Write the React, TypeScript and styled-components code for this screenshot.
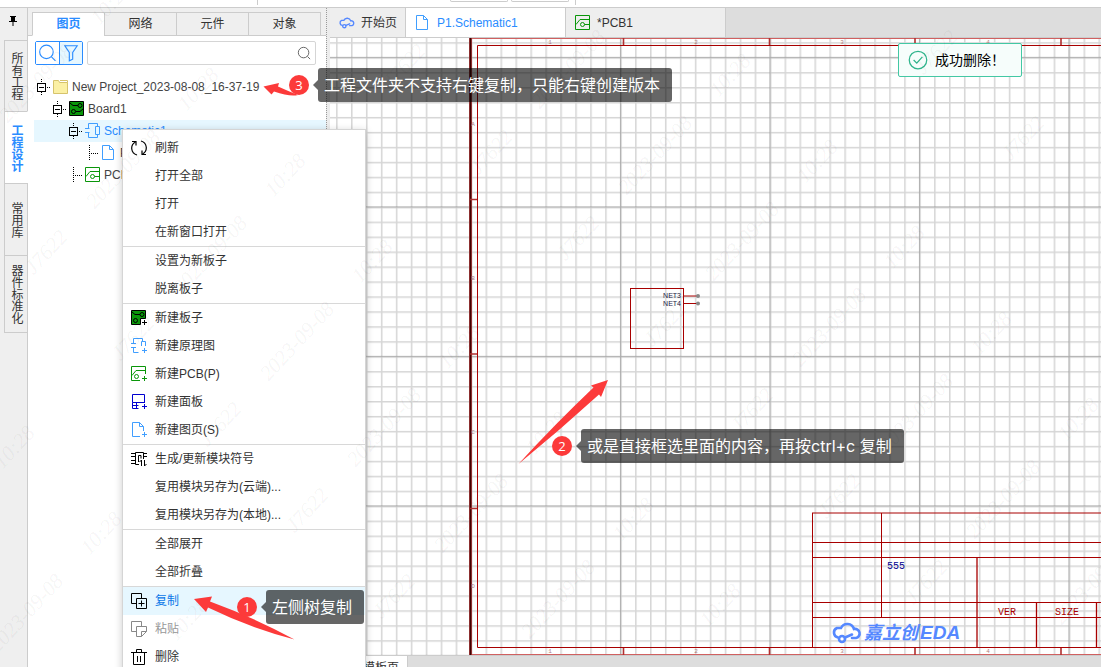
import React from "react";
import styled, { createGlobalStyle, css } from "styled-components";

const GlobalStyle = createGlobalStyle`
  *, *::before, *::after { box-sizing: border-box; }
  html, body, #root { height: 100%; }
  body {
    margin: 0;
    overflow: hidden;
    background: #fff;
    color: #333;
    font: 12px/16px "Liberation Sans", "Noto Sans CJK SC", sans-serif;
  }
  button, input { font: inherit; color: inherit; }
  ul { list-style: none; margin: 0; padding: 0; }
  svg { display: block; }
`;

const blue = "#2a8cff";
const line = "#ccc";

/* ---------- page frame ---------- */

const Page = styled.div`
  position: relative;
  display: flex;
  flex-direction: column;
  height: 100vh;
  overflow: hidden;
`;

const TopStrip = styled.header`
  flex: none;
  height: 8px;
  border-bottom: 1px solid ${line};
  display: flex;
  align-items: flex-start;
  padding-left: 257px;
`;

const StripRule = styled.span`
  width: 1px;
  height: 5px;
  background: ${line};
`;

const StripBox = styled.span<{ $gap: number }>`
  width: 58px;
  height: 2px;
  margin-left: ${(p) => p.$gap}px;
  border: solid ${line};
  border-width: 0 1px 1px;
  border-radius: 0 0 3px 3px;
`;

const StripEnd = styled(StripRule)`
  margin-left: 6px;
`;

const Workspace = styled.div`
  flex: 1;
  min-height: 0;
  display: flex;
`;

/* ---------- left rail ---------- */

const Rail = styled.nav`
  flex: none;
  width: 28px;
  display: flex;
  flex-direction: column;
  align-items: flex-end;
  background: #efefef;
  box-shadow: inset -1px 0 ${line};
`;

const PinButton = styled.button`
  width: 28px;
  height: 32px;
  padding: 0 8px 6px;
  border: 0;
  background: none;
`;

const RailTab = styled.button<{ $active?: boolean; $height: number }>`
  width: 24px;
  height: ${(p) => p.$height}px;
  padding: 0;
  display: flex;
  align-items: center;
  justify-content: center;
  border: solid ${line};
  border-width: 1px 1px 0 1px;
  background: #efefef;
  writing-mode: vertical-rl;
  text-orientation: upright;
  line-height: 14px;
  &:last-child { border-bottom-width: 1px; }
  ${(p) =>
    p.$active &&
    css`
      background: #fff;
      border-right-color: #fff;
      color: ${blue};
      font-weight: 700;
    `}
`;

/* ---------- project panel ---------- */

const Panel = styled.aside`
  flex: none;
  width: 298px;
  display: flex;
  flex-direction: column;
`;

const PanelTabs = styled.div`
  display: flex;
  height: 28px;
  padding: 4px 5px 0 4px;
  background: #efefef;
  box-shadow: inset 0 -1px ${line};
`;

const PanelTab = styled.button<{ $active?: boolean }>`
  flex: 1;
  height: 24px;
  padding: 0;
  border: solid ${line};
  border-width: 1px 0 1px 1px;
  background: #efefef;
  &:last-child { border-right-width: 1px; }
  ${(p) =>
    p.$active &&
    css`
      background: #fff;
      border-bottom-color: #fff;
      color: ${blue};
      font-weight: 700;
    `}
`;

const SearchRow = styled.div`
  display: flex;
  gap: 4px;
  padding: 5px 10px 0 7px;
`;

const ToggleGroup = styled.div`
  display: flex;
  border: 1px solid ${blue};
  border-radius: 2px;
`;

const Toggle = styled.button<{ $on?: boolean }>`
  width: 23px;
  height: 22px;
  padding: 2px;
  border: 0;
  background: ${(p) => (p.$on ? "#e6f7ff" : "#fff")};
  & + & { border-left: 1px solid ${blue}; }
`;

const SearchField = styled.label`
  flex: 1;
  display: flex;
  align-items: center;
  height: 24px;
  padding: 0 4px;
  border: 1px solid #d5d5d5;
  border-radius: 2px;
`;

const SearchInput = styled.input`
  flex: 1;
  min-width: 0;
  border: 0;
  outline: 0;
  background: none;
`;

const Tree = styled.ul`
  padding: 11px 0 0 6px;
`;

const TreeRow = styled.li<{ $depth: number; $active?: boolean }>`
  display: flex;
  align-items: center;
  height: 22px;
  padding-left: ${(p) => 3 + p.$depth * 16}px;
  white-space: nowrap;
  background: ${(p) => (p.$active ? "#e6f7ff" : "transparent")};
  color: ${(p) => (p.$active ? blue : "#444")};
  svg { flex: none; }
`;

const TreeLabel = styled.span`
  margin-left: 3px;
`;

const Splitter = styled.div`
  flex: none;
  width: 4px;
  border-left: 1px dotted #999;
  background: #ececec;
`;

/* ---------- editor ---------- */

const Editor = styled.main`
  flex: 1;
  min-width: 0;
  display: flex;
  flex-direction: column;
`;

const DocTabs = styled.div`
  flex: none;
  display: flex;
  height: 30px;
  background: #ddd;
  border-bottom: 1px solid ${line};
`;

const DocTab = styled.button<{ $width: number; $active?: boolean }>`
  width: ${(p) => p.$width}px;
  display: flex;
  align-items: center;
  gap: 6px;
  padding: 0 0 0 9px;
  border: 0;
  border-right: 1px solid ${line};
  background: ${(p) => (p.$active ? "#fff" : "#eee")};
  color: ${(p) => (p.$active ? blue : "#333")};
  white-space: nowrap;
`;

const Canvas = styled.div`
  flex: 1;
  min-height: 0;
  overflow: hidden;
  background: #fff;
`;

const SheetTabs = styled.footer`
  flex: none;
  height: 12px;
  overflow: hidden;
  display: flex;
  align-items: flex-start;
  background: #ddd;
  border-top: 1px solid ${line};
`;

const SheetTab = styled.button`
  width: 78px;
  height: 24px;
  flex: none;
  padding: 0 8px;
  border: 0;
  border-right: 1px solid ${line};
  background: #fff;
  text-align: right;
`;

/* ---------- context menu ---------- */

const Menu = styled.ul`
  position: absolute;
  left: 122px;
  top: 129px;
  width: 244px;
  padding: 4px 0;
  border: 1px solid #d5d5d5;
  background: #fff;
  box-shadow: 0 2px 8px rgba(0, 0, 0, 0.2);
`;

const MenuGroup = styled.li`
  & + & { border-top: 1px solid #d8d8d8; }
`;

const MenuButton = styled.button<{ $active?: boolean }>`
  display: flex;
  align-items: center;
  width: 100%;
  height: 28px;
  padding: 0 8px;
  border: 0;
  text-align: left;
  background: ${(p) => (p.$active ? "#e6f7ff" : "transparent")};
  color: ${(p) => (p.$active ? "#0a78e8" : "#333")};
  &:disabled { color: #999; }
`;

const MenuIcon = styled.span`
  flex: none;
  width: 24px;
`;

/* ---------- overlays ---------- */

const Toast = styled.div`
  position: absolute;
  right: 79px;
  top: 43px;
  display: flex;
  align-items: center;
  gap: 7px;
  width: 124px;
  height: 34px;
  padding-left: 9px;
  border: 1px solid #43c8a4;
  border-radius: 2px;
  background: #f6fdfb;
  color: #000;
  font-size: 14px;
  line-height: 20px;
  white-space: nowrap;
`;

const Overlay = styled.svg`
  position: absolute;
  left: 0;
  top: 0;
  width: 100%;
  height: 100%;
  pointer-events: none;
`;

const Note = styled.div<{ $x: number; $y: number }>`
  position: absolute;
  left: ${(p) => p.$x}px;
  top: ${(p) => p.$y}px;
  display: flex;
  align-items: center;
  font-family: Inter, "Noto Sans CJK SC", sans-serif;
`;

const Badge = styled.span`
  width: 20px;
  height: 20px;
  margin-right: 4px;
  border-radius: 50%;
  background: #fc3a3a;
  color: #fff;
  font-family: "Open Sans", sans-serif;
  font-size: 13px;
  line-height: 20px;
  text-align: center;
`;

const Pointer = styled.span`
  border: solid transparent;
  border-width: 5px 5px 5px 0;
  border-right-color: rgba(0, 0, 0, 0.6);
`;

const NoteText = styled.span`
  height: 34px;
  padding: 0 12px 0 6px;
  border-radius: 3px;
  background: rgba(0, 0, 0, 0.6);
  color: #fff;
  font-size: 16px;
  line-height: 34px;
  white-space: nowrap;
`;

/* ---------- icons ---------- */

const Icon = ({ children, size = 16, color = "#000" }: { children: React.ReactNode; size?: number; color?: string }) => (
  <svg width={size} height={size} viewBox="0 0 16 16" fill="none" stroke={color} aria-hidden>
    {children}
  </svg>
);

const Plus = () => <path d="M11 12.5h5M13.5 10v5" />;

const Expander = () => (
  <svg width="16" height="22" fill="none" stroke="#000" aria-hidden>
    <path d="M4.5 3v3M4.5 16v3" strokeDasharray="1 1" />
    <rect x="0.5" y="7.5" width="8" height="8" />
    <path d="M2 11.5h5" />
    <path d="M10 11.5h4" strokeDasharray="1 1" />
  </svg>
);

const Branch = () => (
  <svg width="16" height="22" fill="none" stroke="#000" aria-hidden>
    <path d="M4.5 3v16M6 11.5h8" strokeDasharray="1 1" />
  </svg>
);

const FolderIcon = () => (
  <Icon color="#d6c36c">
    <path d="M0.5 1.5h5l1 2h8v11h-14z" fill="#fbf0a4" />
    <path d="M7 1.5h7.500v2" />
  </Icon>
);

const BoardIcon = ({ add }: { add?: boolean }) => (
  <Icon>
    <path d={add ? "M.5 .5h14v8h-5v6h-9z" : "M.5 .5h14v14h-14z"} fill="#0a960a" />
    <path d="M1 2l3 2.500h5" />
    <circle cx="11" cy="4.500" r="2" />
    <circle cx="4.500" cy="10.500" r="2" />
    {add ? <Plus /> : <path d="M7 10.500h4l3.500-3" />}
  </Icon>
);

const SchematicIcon = ({ add }: { add?: boolean }) => (
  <Icon color="#409eff">
    {add ? (
      <>
        <path d="M0 5.5h5M2.5 5V.5h9V4M0 9.5h5M2.5 9.500v5h5M10.500 8V3.500h4V8" />
        <Plus />
      </>
    ) : (
      <path d="M0 5.500h4.500M3.500 5.500v-5h9v3M0 9.500h4.500M3.500 9.500v5h9v-3M10.500 3.500h4v8h-4z" />
    )}
  </Icon>
);

const PcbIcon = ({ add }: { add?: boolean }) => (
  <Icon color="#0a960a">
    <path d={add ? "M9 14.5H.5V.5h14V8" : "M.5 .5h14v14h-14z"} />
    <path d="M1 9.500L5 4.500h10" />
    <circle cx={add ? 5.5 : 7.5} cy={add ? 10.5 : 9.5} r="2" />
    {add ? <Plus /> : <path d="M9.500 9.500h5" />}
  </Icon>
);

const PageIcon = ({ add }: { add?: boolean }) => (
  <Icon color="#409eff">
    <path d={add ? "M9 14.500H1.500V.5h7l4 4V9" : "M1.500 .5h7l4 4v10h-11z"} />
    <path d="M8.500 .5v4h4" />
    {add && <Plus />}
  </Icon>
);

const PanelIcon = () => (
  <Icon color="#0000d0">
    <path d="M13.500 9V.5h-12v8h12M1.500 8.500v6h6M1.500 11.500h6M5.500 9v6" />
    <Plus />
  </Icon>
);

const RefreshIcon = () => (
  <Icon>
    <path d="M6 15A7 7 0 0 1 4.500 2M10 1A7 7 0 0 1 11.500 14" strokeWidth="1.200" />
    <path d="M1 1.500h4v4M15 14.500h-4v-4" strokeWidth="1.200" />
  </Icon>
);

const ModuleIcon = () => (
  <Icon>
    <path d="M8 13.500H4.500v-12h8V8M0 2.500h4M0 5.500h4M0 9.500h4M0 12.500h4M13 2.500h3M13 5.500h3M7.500 11V4.500h2.500v3M10.500 15V9L8.500 11M13.500 9v6l2-2" />
  </Icon>
);

const CopyIcon = () => (
  <Icon>
    <path d="M5 10.5H.5V.5h10V5M5.5 5.5h10v10h-10zM10.5 7.5v6M7.5 10.5h6" />
  </Icon>
);

const PasteIcon = () => (
  <Icon color="#888">
    <path d="M5 10.5H.5V.5h10V5M5.5 15.5v-10h10v5l-5 5zM10.5 15.5v-5h5" />
  </Icon>
);

const TrashIcon = () => (
  <Icon>
    <path d="M0 3.5h16M5.500 3V.5h5V3M2.500 4v11.500h11V4M6.500 7v6M9.500 7v6" />
  </Icon>
);

const CloudLogo = ({ width, height }: { width: number; height: number }) => (
  <svg width={width} height={height} viewBox="0 0 30 22" fill="none" stroke="#5588ff" strokeWidth="2.600" strokeLinecap="round" aria-hidden>
    <path d="M6 15.500a5 5 0 0 1-1-9.500h4a7 7 0 0 1 13 1a4.500 4.500 0 0 1 2 9h-4" />
    <circle cx="10" cy="17" r="3" />
    <path d="M13 15.500l7-3" />
  </svg>
);

/* ---------- schematic drawing ---------- */

const red = "#a80000";

const SchematicDrawing = () => (
  <svg width="100%" height="100%" aria-label="Schematic sheet">
    <defs>
      <pattern id="minor" x="-8.9" y="4.2" width="14.95" height="14.95" patternUnits="userSpaceOnUse">
        <path d="M0 .8h14.95M.8 0v14.95" stroke="#000" strokeOpacity="0.16" strokeWidth="1.500" />
      </pattern>
      <pattern id="major" x="-9.1" y="18.8" width="149.5" height="149.5" patternUnits="userSpaceOnUse">
        <path d="M0 .6h149.5M.6 0v149.5" stroke="#000" strokeOpacity="0.2" strokeWidth="1.200" />
      </pattern>
    </defs>
    <rect width="100%" height="100%" fill="url(#minor)" />
    <rect width="100%" height="100%" fill="url(#major)" />

    <g fill="none" stroke={red}>
      <path d="M141 .5H2000M141 616.5H2000" stroke="#d06060" />
      <path d="M140.5 0v617" stroke="#c05050" strokeWidth="3" />
      <path d="M140.500 0v617" stroke="#400000" strokeWidth="1.800" />
      <path d="M2000 7.5H147.5V609.5H2000" />
      <path d="M140 161.5h7M140 316h7M140 470.5h7" stroke="#b03030" strokeWidth="1.600" />
      <path d="M293.5 0v7M439.5 0v7M585 0v7M731 0v7M293.5 610v7M439.5 610v7M585 610v7M731 610v7" stroke="#b03030" strokeWidth="1.600" />
      <path d="M482.5 609V475M482 475H2000M482 504.5H2000M482 519.5H2000M482 564.5H2000M482 579.5H2000M551.5 475V580" />
      <path d="M647 519v90M706.5 564v45M766.5 564v45" strokeWidth="1.300" />
      <rect x="300.5" y="250.5" width="53" height="60" />
      <path d="M353 258h14M353 265.5h14" />
    </g>
    <circle cx="368" cy="258" r="2" fill="#888" />
    <circle cx="368" cy="265.5" r="2" fill="#888" />

    <g fontFamily='"Liberation Sans", sans-serif' fontSize="7" fill="#224" textAnchor="end">
      <text x="351" y="260">NET3</text>
      <text x="351" y="268">NET4</text>
    </g>
    <g fontFamily='"Liberation Mono", monospace' fontSize="6" fill="#b08080" textAnchor="middle">
      {["A", "B", "C", "D"].map((t, i) => (
        <text key={t} x="143" y={88 + i * 154}>{t}</text>
      ))}
      {["1", "2", "3", "4"].map((t, i) => (
        <React.Fragment key={t}>
          <text x={220 + i * 146} y="6">{t}</text>
          <text x={220 + i * 146} y="615">{t}</text>
        </React.Fragment>
      ))}
    </g>
    <g fontFamily='"Liberation Mono", monospace' fontSize="10">
      <text x="557" y="531" fill="#000090">555</text>
      <text x="668" y="577" fill={red}>VER</text>
      <text x="725" y="577" fill={red}>SIZE</text>
    </g>
    <g transform="translate(502 584)">
      <CloudLogo width={30} height={22} />
    </g>
    <g fill="#5588ff" fontWeight="700" fontStyle="italic">
      <text x="534" y="601" fontSize="18" fontFamily='"Noto Sans CJK SC", sans-serif'>嘉立创</text>
      <text x="590" y="601" fontSize="19" fontFamily='"Liberation Sans", sans-serif'>EDA</text>
    </g>
  </svg>
);

/* ---------- watermark: strips running up and to the right on a skewed lattice ---------- */

const stripParts = [
  { text: "J7622", dx: 0, dy: 0 },
  { text: "2023-09-08", dx: 77, dy: -83 },
  { text: "10:28", dx: 152, dy: -163 },
];

const marks = [-1, 0, 1, 2, 3]
  .flatMap((col) =>
    Array.from({ length: 16 }, (_, i) => i - 6).flatMap((row) =>
      stripParts.map((p) => ({
        text: p.text,
        x: 46 + col * 358 + row * 87 + p.dx,
        y: 252 - col * 186 + row * 86 + p.dy,
      }))
    )
  )
  .filter((m) => m.x > 0 && m.x < 1100 && m.y > 0 && m.y < 660);

const Watermark = () => (
  <Overlay aria-hidden>
    <g fill="#000" fillOpacity="0.05" fontFamily='"Liberation Serif", serif' fontStyle="italic" fontSize="21" textAnchor="middle">
      {marks.map((m) => (
        <text key={`${m.x},${m.y}`} y="7" transform={`translate(${m.x} ${m.y}) rotate(-47)`}>
          {m.text}
        </text>
      ))}
    </g>
  </Overlay>
);

const Arrows = () => (
  <Overlay aria-hidden>
    <g fill="#fc3a3a">
      <path d="M194 599L212 596.500L210 601.500Q255 618 294.500 639.500Q250 628 208 607.500L206 612Z" />
      <path d="M608 380L601 397L599 394.500Q560 430 518.500 464Q554 425 593.500 387.500L591 385.500Z" />
      <path d="M263.500 86.500L279 83L278 86.500Q288 91 298 95Q290 97 274 91.500L271.500 94.500Z" />
    </g>
  </Overlay>
);

/* ---------- data ---------- */

type Entry = { label: string; icon?: React.ReactNode; active?: boolean; disabled?: boolean };

const menu: Entry[][] = [
  [{ label: "刷新", icon: <RefreshIcon /> }, { label: "打开全部" }, { label: "打开" }, { label: "在新窗口打开" }],
  [{ label: "设置为新板子" }, { label: "脱离板子" }],
  [
    { label: "新建板子", icon: <BoardIcon add /> },
    { label: "新建原理图", icon: <SchematicIcon add /> },
    { label: "新建PCB(P)", icon: <PcbIcon add /> },
    { label: "新建面板", icon: <PanelIcon /> },
    { label: "新建图页(S)", icon: <PageIcon add /> },
  ],
  [{ label: "生成/更新模块符号", icon: <ModuleIcon /> }, { label: "复用模块另存为(云端)..." }, { label: "复用模块另存为(本地)..." }],
  [{ label: "全部展开" }, { label: "全部折叠" }],
  [
    { label: "复制", icon: <CopyIcon />, active: true },
    { label: "粘贴", icon: <PasteIcon />, disabled: true },
    { label: "删除", icon: <TrashIcon /> },
  ],
];

const notes = [
  { n: 3, x: 289, y: 68, text: "工程文件夹不支持右键复制，只能右键创建版本" },
  { n: 2, x: 552, y: 429, text: "或是直接框选里面的内容，再按ctrl+c 复制" },
  { n: 1, x: 237, y: 590, text: "左侧树复制" },
];

export default function App() {
  return (
    <Page>
      <GlobalStyle />
      <TopStrip>
        <StripRule />
        <StripBox $gap={192} />
        <StripBox $gap={3} />
        <StripEnd />
      </TopStrip>

      <Workspace>
        <Rail>
          <PinButton aria-label="固定">
            <svg width="10" height="12" aria-hidden>
              <path d="M2 1h6v1H7v4h2v1H1V6h2V2H2zM4.500 7h1v4h-1z" />
            </svg>
          </PinButton>
          <RailTab $height={71}>所有工程</RailTab>
          <RailTab $height={72} $active>工程设计</RailTab>
          <RailTab $height={72}>常用库</RailTab>
          <RailTab $height={78}>器件标准化</RailTab>
        </Rail>

        <Panel>
          <PanelTabs>
            <PanelTab $active>图页</PanelTab>
            <PanelTab>网络</PanelTab>
            <PanelTab>元件</PanelTab>
            <PanelTab>对象</PanelTab>
          </PanelTabs>
          <SearchRow>
            <ToggleGroup>
              <Toggle aria-label="搜索">
                <Icon size={18} color={blue}>
                  <circle cx="7.500" cy="7" r="6" />
                  <path d="M12 11.500l3.500 3.500" />
                </Icon>
              </Toggle>
              <Toggle $on aria-label="筛选">
                <Icon size={18} color={blue}>
                  <path d="M2.500 1.500h11l-4 6v6l-3 1.500v-7.500z" />
                </Icon>
              </Toggle>
            </ToggleGroup>
            <SearchField>
              <SearchInput aria-label="搜索图页" />
              <Icon size={14} color="#555">
                <circle cx="7.500" cy="7.500" r="6" />
                <path d="M12 12l3 3" />
              </Icon>
            </SearchField>
          </SearchRow>
          <Tree>
            <TreeRow $depth={0}><Expander /><FolderIcon /><TreeLabel>New Project_2023-08-08_16-37-19</TreeLabel></TreeRow>
            <TreeRow $depth={1}><Expander /><BoardIcon /><TreeLabel>Board1</TreeLabel></TreeRow>
            <TreeRow $depth={2} $active><Expander /><SchematicIcon /><TreeLabel>Schematic1</TreeLabel></TreeRow>
            <TreeRow $depth={3}><Branch /><PageIcon /><TreeLabel>P1</TreeLabel></TreeRow>
            <TreeRow $depth={2}><Branch /><PcbIcon /><TreeLabel>PCB1</TreeLabel></TreeRow>
          </Tree>
        </Panel>
        <Splitter />

        <Editor>
          <DocTabs>
            <DocTab $width={76}><CloudLogo width={16} height={14} />开始页</DocTab>
            <DocTab $width={160} $active><PageIcon />P1.Schematic1</DocTab>
            <DocTab $width={160}><PcbIcon />*PCB1</DocTab>
          </DocTabs>
          <Canvas><SchematicDrawing /></Canvas>
          <SheetTabs><SheetTab>模板页</SheetTab></SheetTabs>
        </Editor>
      </Workspace>

      <Menu>
        {menu.map((group, i) => (
          <MenuGroup key={i}>
            {group.map((e) => (
              <MenuButton key={e.label} $active={e.active} disabled={e.disabled}>
                <MenuIcon>{e.icon}</MenuIcon>
                {e.label}
              </MenuButton>
            ))}
          </MenuGroup>
        ))}
      </Menu>

      <Toast role="status">
        <Icon size={20} color="#2fb48c">
          <circle cx="8" cy="8" r="7" />
          <path d="M4.500 8l2.500 2.500 4.500-5" />
        </Icon>
        成功删除！
      </Toast>

      <Watermark />
      <Arrows />
      {notes.map((n) => (
        <Note key={n.n} $x={n.x} $y={n.y}>
          <Badge>{n.n}</Badge>
          <Pointer />
          <NoteText>{n.text}</NoteText>
        </Note>
      ))}
    </Page>
  );
}
